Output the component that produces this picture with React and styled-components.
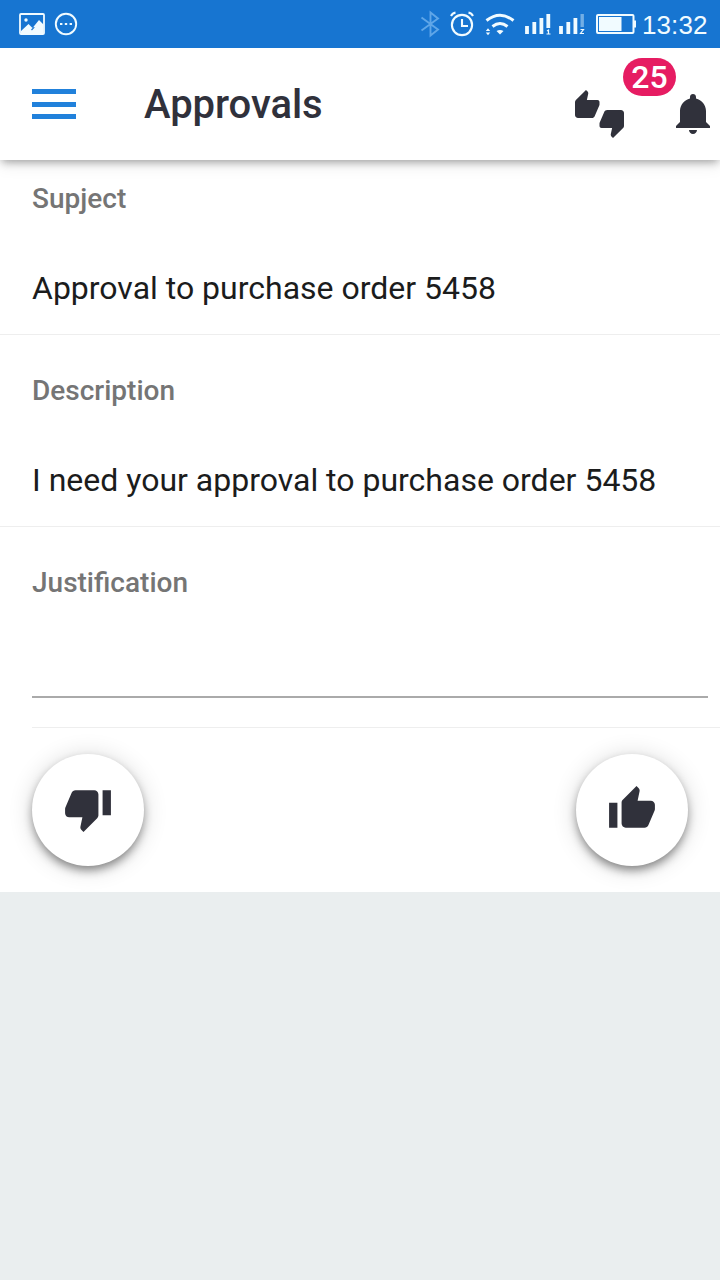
import React from "react";
import styled, { createGlobalStyle } from "styled-components";

const Global = createGlobalStyle`
  * { box-sizing: border-box; }
  body { margin: 0; background: #eaeeef; font-family: Roboto, "Liberation Sans", sans-serif; }
`;
const Screen = styled.div`
  width: 720px;
  height: 1280px;
  display: flex;
  flex-direction: column;
  background: #eaeeef;
  overflow: hidden;
`;
const StatusBar = styled.div`
  height: 48px;
  flex: none;
  position: relative;
  z-index: 2;
  display: flex;
  justify-content: space-between;
  background: #1775d1;
  color: #f1fbff;
`;
const StatusGroup = styled.div`
  display: flex;
`;
const StatusIcon = styled.svg`
  display: block;
  height: 48px;
  flex: none;
`;
const Clock = styled.time`
  width: 78px;
  font-family: "Liberation Sans", sans-serif;
  font-size: 26px;
  line-height: 48px;
  letter-spacing: 0.1px;
  padding-top: 1px;
  white-space: nowrap;
`;
const Header = styled.header`
  height: 112px;
  flex: none;
  position: relative;
  z-index: 1;
  display: flex;
  align-items: center;
  padding: 0 10px 0 32px;
  background: #fff;
  box-shadow: 0 4px 8px -2px rgba(0, 0, 0, 0.32), 0 4px 16px rgba(0, 0, 0, 0.1);
`;
const MenuButton = styled.button`
  width: 44px;
  height: 30px;
  padding: 0;
  border: 0;
  background: none;
  display: flex;
  flex-direction: column;
  justify-content: space-between;
`;
const MenuLine = styled.span`
  width: 44px;
  height: 5px;
  background: #2181db;
`;
const Title = styled.h1`
  flex: 1;
  margin: 0 0 0 68px;
  padding-top: 2px;
  font-size: 40px;
  font-weight: 500;
  line-height: 48px;
  letter-spacing: -0.05px;
  color: #30313b;
`;
const HeaderIcon = styled.svg`
  display: block;
  flex: none;
  fill: #30313b;
  margin: ${(p) => p.$margin};
`;
const Badge = styled.span`
  position: absolute;
  left: 623px;
  top: 10px;
  width: 53px;
  height: 38px;
  border-radius: 19px;
  background: #e61c62;
  color: #fff;
  font-size: 32px;
  font-weight: 500;
  line-height: 38px;
  text-align: center;
`;
const Form = styled.main`
  height: 732px;
  flex: none;
  background: #fff;
`;
const Field = styled.section`
  height: ${(p) => p.$height}px;
  padding: ${(p) => p.$top}px 0 0 32px;
  border-bottom: 1px solid #eeeeee;
`;
const Label = styled.div`
  font-size: 28px;
  font-weight: 500;
  line-height: 32px;
  color: #757575;
`;
const Value = styled.div`
  margin-top: 53px;
  font-size: 32px;
  line-height: 40px;
  color: #1b1c1c;
  white-space: nowrap;
`;
const InputField = styled.section`
  height: 201px;
  margin-left: 32px;
  padding: 40px 12px 0 0;
  border-bottom: 1px solid #eeeeee;
`;
const Input = styled.input`
  display: block;
  width: 100%;
  height: 99px;
  padding: 50px 0 0;
  border: 0;
  border-bottom: 2px solid #aaaaaa;
  outline: 0;
  background: none;
  font: 32px Roboto, sans-serif;
`;
const Actions = styled.div`
  display: flex;
  justify-content: space-between;
  padding: 26px 32px 0;
`;
const RoundButton = styled.button`
  width: 112px;
  height: 112px;
  padding: 0 0 2px;
  display: flex;
  align-items: center;
  justify-content: center;
  border: 0;
  border-radius: 50%;
  background: #fff;
  box-shadow: 0 5px 10px -1px rgba(0, 0, 0, 0.44), 0 2px 24px rgba(0, 0, 0, 0.16);
`;
const Thumb = styled.svg`
  display: block;
  width: 50px;
  height: 50px;
  fill: #30313b;
`;

function NotificationIcons() {
  return (
    <StatusIcon width="90" viewBox="0 0 90 48" fill="none" stroke="currentColor">
      <rect x="20" y="14" width="24" height="20" rx="1" strokeWidth="1.8" />
      <circle cx="26" cy="20" r="1.7" fill="currentColor" stroke="none" />
      <path d="M21 31l7.5-7 4 4 6.5-8 4.5 4.5V33H21z" fill="currentColor" stroke="none" />
      <path d="M31.5 30l2.8-2.8" stroke="#1775d1" strokeWidth="1.2" />
      <circle cx="66" cy="24" r="10.2" strokeWidth="1.9" />
      <path d="M60 24h2.4M64.8 24h2.4M69.6 24h2.4" strokeWidth="2.2" />
    </StatusIcon>
  );
}

function SystemIcons() {
  return (
    <StatusIcon width="232" viewBox="410 0 232 48" fill="none" stroke="currentColor">
      <path d="M421.5 17.5l16.5 12-7.5 6V12.5l7.5 6-16.5 12" stroke="#5fa6e8" strokeWidth="1.9" />
      <circle cx="462" cy="25" r="10.1" strokeWidth="2.1" />
      <path d="M462 19v7h6M451 16q1.5-3 4.5-3.4M473 16q-1.5-3-4.5-3.4" strokeWidth="2.1" />
      <path d="M486.5 20.5q13.5-10.5 27 0M492.5 26.5q7.5-6 15 0" strokeWidth="3" />
      <path d="M496.5 31q3.5-1.8 7 0l-3.5 3.6z" fill="currentColor" stroke="none" />
      <path d="M485.8 31l2.2-2.8 2.2 2.8zM485.8 32.4h4.4l-2.2 2.8z" fill="currentColor" stroke="none" />
      <path d="M527 34v-8M534.3 34V22M541.4 34V18" strokeWidth="3.8" />
      <path d="M548.3 28V14" strokeWidth="3.8" />
      <path d="M547 31l1.5-1v4M546.5 34h4" strokeWidth="1.2" />
      <path d="M561 34v-8M568.3 34V22M575.4 34V18" strokeWidth="3.8" />
      <path d="M582.2 27V14" stroke="#72aee5" strokeWidth="3.4" />
      <path d="M580.5 29.5h3l-3 4h3.5" strokeWidth="1.2" />
      <rect x="597" y="15" width="36.5" height="18" rx="1" strokeWidth="2" />
      <path d="M599 17h22.5v14H599zM634 20.5h2v7h-2z" fill="currentColor" stroke="none" />
    </StatusIcon>
  );
}

function ThumbDown() {
  return (
    <Thumb viewBox="0 0 24 24">
      <path d="M15 3H6c-.83 0-1.54.5-1.84 1.22l-3.02 7.05c-.09.23-.14.47-.14.73v2c0 1.1.9 2 2 2h6.31l-.95 4.57-.03.32c0 .41.17.79.44 1.06L9.83 23l6.59-6.59c.36-.36.58-.86.58-1.41V5c0-1.1-.9-2-2-2zm4 0v12h4V3h-4z" />
    </Thumb>
  );
}

function ThumbUp() {
  return (
    <Thumb viewBox="0 0 24 24">
      <path d="M1 21h4V9H1v12zm22-11c0-1.1-.9-2-2-2h-6.31l.95-4.57.03-.32c0-.41-.17-.79-.44-1.06L14.17 1 7.59 7.59C7.22 7.95 7 8.45 7 9v10c0 1.1.9 2 2 2h9c.83 0 1.54-.5 1.84-1.22l3.02-7.05c.09-.23.14-.47.14-.73v-2z" />
    </Thumb>
  );
}

export default function App() {
  return (
    <>
      <Global />
      <Screen>
        <StatusBar>
          <NotificationIcons />
          <StatusGroup>
            <SystemIcons />
            <Clock>13:32</Clock>
          </StatusGroup>
        </StatusBar>
        <Header>
          <MenuButton aria-label="Menu">
            <MenuLine />
            <MenuLine />
            <MenuLine />
          </MenuButton>
          <Title>Approvals</Title>
          <HeaderIcon $margin="20px 52px 0 0" width="49" height="48" viewBox="0 0 24 24" preserveAspectRatio="none">
            <path d="M12 6c0-.55-.45-1-1-1H5.82l.66-3.18.02-.23c0-.31-.13-.59-.33-.8L5.38 0 .44 4.94C.17 5.21 0 5.59 0 6v6.5c0 .83.67 1.5 1.5 1.5h6.75c.62 0 1.15-.38 1.38-.91l2.26-5.29c.07-.17.11-.36.11-.55V6zm10.5 4h-6.75c-.62 0-1.15.38-1.38.91l-2.26 5.29c-.07.17-.11.36-.11.55V18c0 .55.45 1 1 1h5.18l-.66 3.18-.02.24c0 .31.13.59.33.8l.79.78 4.94-4.94c.27-.27.44-.65.44-1.06v-6.5c0-.83-.67-1.5-1.5-1.5z" />
          </HeaderIcon>
          <HeaderIcon $margin="20px 0 0" width="34" height="40" viewBox="80 48 352 416" preserveAspectRatio="none">
            <path d="M256 464c22.779 0 41.411-18.719 41.411-41.6h-82.823c0 22.881 18.633 41.6 41.412 41.6zm134.589-124.8V224.8c0-63.44-44.516-117.518-103.53-131.041V79.2c0-17.682-13.457-31.2-31.059-31.2s-31.059 13.518-31.059 31.2v14.559c-59.015 13.523-103.53 67.601-103.53 131.041v114.4L80 380.8v20.8h352v-20.8l-41.411-41.6z" />
          </HeaderIcon>
          <Badge>25</Badge>
        </Header>
        <Form>
          <Field $height={175} $top={23}>
            <Label>Supject</Label>
            <Value>Approval to purchase order 5458</Value>
          </Field>
          <Field $height={192} $top={40}>
            <Label>Description</Label>
            <Value>I need your approval to purchase order 5458</Value>
          </Field>
          <InputField>
            <Label as="label" htmlFor="justification">Justification</Label>
            <Input id="justification" />
          </InputField>
          <Actions>
            <RoundButton aria-label="Reject"><ThumbDown /></RoundButton>
            <RoundButton aria-label="Approve"><ThumbUp /></RoundButton>
          </Actions>
        </Form>
      </Screen>
    </>
  );
}
